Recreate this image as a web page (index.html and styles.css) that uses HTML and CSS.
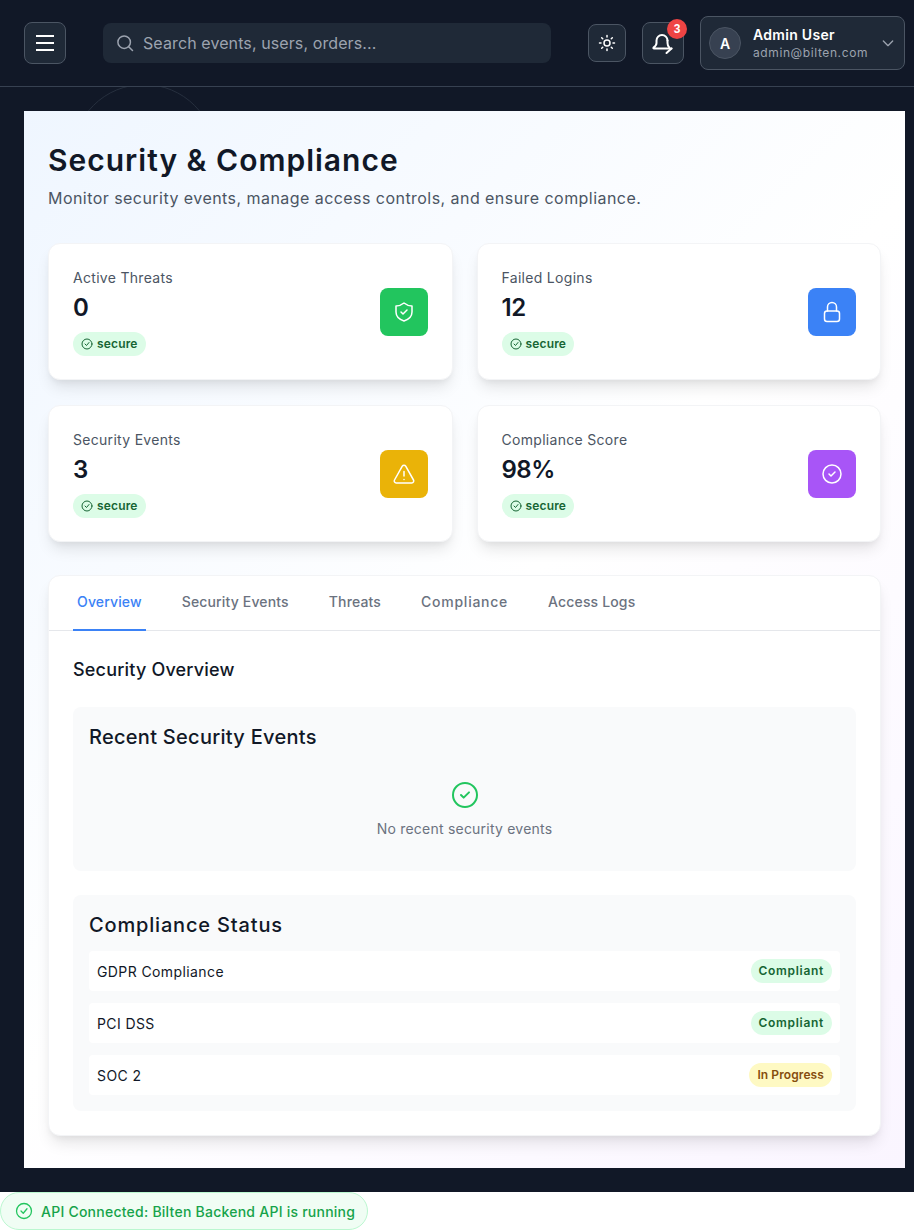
FILE: index.html
```html
<!DOCTYPE html>
<html lang="en">
<head>
    <meta charset="UTF-8">
    <meta name="viewport" content="width=device-width, initial-scale=1.0">
    <title>Security &amp; Compliance</title>
    <link rel="stylesheet" href="styles.css">
</head>
<body>
    <div class="shell">
        <header class="topbar">
            <button class="icon-btn menu-btn">
                <svg width="24" height="24" viewBox="0 0 24 24" fill="none" stroke="#fff" stroke-width="2"><path d="M3 5h18M3 12h18M3 19h18"/></svg>
            </button>
            <div class="search">
                <svg width="20" height="20" viewBox="0 0 24 24" fill="none" stroke="#9ca3af" stroke-width="1.8" stroke-linecap="round"><circle cx="11" cy="11" r="7.5"/><path d="m21 21-4.5-4.5"/></svg>
                <span>Search events, users, orders...</span>
            </div>
            <button class="icon-btn theme-btn">
                <svg width="18" height="18" viewBox="0 0 24 24" fill="none" stroke="#fff" stroke-width="2" stroke-linecap="round"><circle cx="12" cy="12" r="4"/><path d="M12 2v2M12 20v2M4.9 4.9l1.4 1.4M17.7 17.7l1.4 1.4M2 12h2M20 12h2M4.9 19.1l1.4-1.4M17.7 6.3l1.4-1.4"/></svg>
            </button>
            <button class="icon-btn bell-btn">
                <svg width="24" height="24" viewBox="0 0 24 24" fill="none" stroke="#fff" stroke-width="2" stroke-linecap="round" stroke-linejoin="round"><path d="M16.500 9.500a5.500 5.500 0 0 0-11 0V12c0 2-1.500 3.500-3 4.500-.4.500 0 1 .5 1H20.500"/><path d="M16.500 9.500V12c0 2 .7 3.500 1.800 4.500"/><path d="m15.500 22 5-4.500"/></svg>
                <span class="badge">3</span>
            </button>
            <div class="user-box">
                <span class="avatar">A</span>
                <div class="user-text">
                    <div class="user-name">Admin User</div>
                    <div class="user-mail">admin@bilten.com</div>
                </div>
                <svg class="chevron" width="16" height="16" viewBox="0 0 24 24" fill="none" stroke="#9ca3af" stroke-width="2" stroke-linecap="round" stroke-linejoin="round"><path d="m5 9 7 7 7-7"/></svg>
            </div>
        </header>

        <div class="ring"></div>

        <main class="panel">
            <h1>Security &amp; Compliance</h1>
            <p class="subtitle">Monitor security events, manage access controls, and ensure compliance.</p>

            <div class="stats">
                <div class="stat">
                    <div>
                        <div class="stat-label">Active Threats</div>
                        <div class="stat-value">0</div>
                        <span class="secure"><svg width="12" height="12" viewBox="0 0 24 24" fill="none" stroke="#166534" stroke-width="2" stroke-linecap="round" stroke-linejoin="round"><circle cx="12" cy="12" r="10"/><path d="m8 12 3 3 5-6"/></svg>secure</span>
                    </div>
                    <div class="stat-icon green">
                        <svg width="24" height="24" viewBox="0 0 24 24" fill="none" stroke="#fff" stroke-width="1.5" stroke-linecap="round" stroke-linejoin="round"><path d="M12 3c2.500 2 5 3 8 3v6c0 5-3.500 7.500-8 9-4.500-1.500-8-4-8-9V6c3 0 5.500-1 8-3Z"/><path d="m9 12 2 2 4-4"/></svg>
                    </div>
                </div>
                <div class="stat">
                    <div>
                        <div class="stat-label">Failed Logins</div>
                        <div class="stat-value">12</div>
                        <span class="secure"><svg width="12" height="12" viewBox="0 0 24 24" fill="none" stroke="#166534" stroke-width="2" stroke-linecap="round" stroke-linejoin="round"><circle cx="12" cy="12" r="10"/><path d="m8 12 3 3 5-6"/></svg>secure</span>
                    </div>
                    <div class="stat-icon blue">
                        <svg width="24" height="24" viewBox="0 0 24 24" fill="none" stroke="#fff" stroke-width="1.5" stroke-linecap="round" stroke-linejoin="round"><rect x="4.500" y="11" width="15" height="10.500" rx="2.500"/><path d="M7.500 11V7a4.500 4.500 0 0 1 9 0v4"/></svg>
                    </div>
                </div>
                <div class="stat">
                    <div>
                        <div class="stat-label">Security Events</div>
                        <div class="stat-value">3</div>
                        <span class="secure"><svg width="12" height="12" viewBox="0 0 24 24" fill="none" stroke="#166534" stroke-width="2" stroke-linecap="round" stroke-linejoin="round"><circle cx="12" cy="12" r="10"/><path d="m8 12 3 3 5-6"/></svg>secure</span>
                    </div>
                    <div class="stat-icon yellow">
                        <svg width="24" height="24" viewBox="0 0 24 24" fill="none" stroke="#fff" stroke-width="1.5" stroke-linecap="round" stroke-linejoin="round"><path d="M10.300 4.200 2.500 18a2 2 0 0 0 1.700 3h15.600a2 2 0 0 0 1.700-3L13.700 4.200a2 2 0 0 0-3.400 0Z"/><path d="M12 9.500v4.500M12 17.500h.01"/></svg>
                    </div>
                </div>
                <div class="stat">
                    <div>
                        <div class="stat-label">Compliance Score</div>
                        <div class="stat-value">98%</div>
                        <span class="secure"><svg width="12" height="12" viewBox="0 0 24 24" fill="none" stroke="#166534" stroke-width="2" stroke-linecap="round" stroke-linejoin="round"><circle cx="12" cy="12" r="10"/><path d="m8 12 3 3 5-6"/></svg>secure</span>
                    </div>
                    <div class="stat-icon purple">
                        <svg width="24" height="24" viewBox="0 0 24 24" fill="none" stroke="#fff" stroke-width="1.5" stroke-linecap="round" stroke-linejoin="round"><circle cx="12" cy="12" r="9"/><path d="m9 12 2 2 4-4"/></svg>
                    </div>
                </div>
            </div>

            <section class="tabs-card">
                <nav class="tabs">
                    <a class="tab active">Overview</a>
                    <a class="tab">Security Events</a>
                    <a class="tab">Threats</a>
                    <a class="tab tab-wide">Compliance</a>
                    <a class="tab">Access Logs</a>
                </nav>
                <div class="tab-body">
                    <h2>Security Overview</h2>
                    <div class="box">
                        <h3>Recent Security Events</h3>
                        <div class="empty">
                            <svg width="32" height="32" viewBox="0 0 24 24" fill="none" stroke="#22c55e" stroke-width="1.500" stroke-linecap="round" stroke-linejoin="round"><circle cx="12" cy="12" r="9"/><path d="m9 12 2 2 4-4"/></svg>
                            <p>No recent security events</p>
                        </div>
                    </div>
                    <div class="box">
                        <h3 class="status-title">Compliance Status</h3>
                        <div class="rows">
                            <div class="row"><span>GDPR Compliance</span><span class="pill ok">Compliant</span></div>
                            <div class="row"><span>PCI DSS</span><span class="pill ok">Compliant</span></div>
                            <div class="row"><span>SOC 2</span><span class="pill wip">In Progress</span></div>
                        </div>
                    </div>
                </div>
            </section>
        </main>
    </div>

    <div class="api-status">
        <svg width="18" height="18" viewBox="0 0 24 24" fill="none" stroke="#22c55e" stroke-width="1.700" stroke-linecap="round" stroke-linejoin="round"><circle cx="12" cy="12" r="10"/><path d="m8 12 3 3 5-6"/></svg>
        API Connected: Bilten Backend API is running
    </div>
</body>
</html>
```

FILE: styles.css
```css
* { box-sizing: border-box; }
body { margin: 0; background: #fff; font-family: "Inter", "Liberation Sans", sans-serif; color: #111827; }
h1, h2, h3, p { margin: 0; }

.shell { position: relative; height: 1192px; background: #111827; }

.topbar { position: relative; z-index: 1; display: flex; align-items: center; height: 87px; padding: 0 9px 0 24px; background: #111827; border-bottom: 1px solid #374151; }
.icon-btn { position: relative; display: flex; align-items: center; justify-content: center; padding: 0; background: #1f2937; border: 1px solid #4b5563; border-radius: 8px; }
.menu-btn { width: 42px; height: 42px; }
.theme-btn { width: 38px; height: 38px; margin-left: 37px; }
.bell-btn { width: 42px; height: 42px; margin-left: 16px; }
.badge { position: absolute; top: -4px; right: -4px; width: 20px; height: 20px; line-height: 20px; border-radius: 50%; background: #ef4444; color: #fff; font-size: 12px; font-weight: 600; }

.search { display: flex; align-items: center; gap: 8px; width: 448px; height: 40px; margin-left: 37px; padding-left: 12px; background: #1f2937; border-radius: 8px; color: #9ca3af; font-size: 16px; letter-spacing: .1px; }

.user-box { display: flex; align-items: center; width: 205px; height: 54px; margin-left: 16px; padding: 0 8px; background: #1f2937; border: 1px solid #4b5563; border-radius: 8px; }
.avatar { display: flex; align-items: center; justify-content: center; width: 32px; height: 32px; border-radius: 50%; background: #374151; border: 1px solid #4b5563; color: #fff; font-size: 14px; font-weight: 600; }
.user-text { flex: 1; margin-left: 12px; padding-top: 2px; line-height: 18px; }
.user-name { color: #fff; font-size: 14px; font-weight: 600; letter-spacing: .3px; }
.user-mail { color: #9ca3af; font-size: 12px; letter-spacing: .6px; }

.ring { position: absolute; left: 72px; top: 84px; width: 144px; height: 144px; border: 1px solid #262f3e; border-radius: 50%; }

.panel { position: relative; width: 881px; height: 1057px; margin: 24px 0 0 24px; padding: 31px 24px 0; background: linear-gradient(135deg, #eff6ff 0%, #fff 50%, #faf5ff 100%); }
h1 { font-size: 30px; font-weight: 600; line-height: 36px; letter-spacing: 1px; }
.subtitle { margin-top: 8px; font-size: 16px; line-height: 24px; color: #4b5563; letter-spacing: .45px; }

.stats { display: grid; grid-template-columns: 1fr 1fr; gap: 25px 24px; margin-top: 33px; }
.stat { display: flex; align-items: center; justify-content: space-between; height: 137px; padding: 0 24px; background: #fff; border: 1px solid #f3f4f6; border-radius: 12px; box-shadow: 0 10px 15px -3px rgba(0, 0, 0, .1), 0 4px 6px -2px rgba(0, 0, 0, .05); }
.stat-label { font-size: 14px; line-height: 20px; color: #4b5563; letter-spacing: .3px; }
.stat-value { margin-top: 4px; font-size: 24px; line-height: 32px; font-weight: 600; letter-spacing: -.5px; }
.secure { display: inline-flex; align-items: center; gap: 4px; height: 24px; margin-top: 8px; padding: 0 8px; border-radius: 12px; background: #dcfce7; color: #166534; font-size: 12px; font-weight: 600; letter-spacing: .15px; }
.stat-icon { display: flex; align-items: center; justify-content: center; width: 48px; height: 48px; border-radius: 8px; }
.green { background: #22c55e; }
.blue { background: #3b82f6; }
.yellow { background: #eab308; }
.purple { background: #a855f7; }

.tabs-card { margin-top: 33px; background: #fff; border: 1px solid #f3f4f6; border-radius: 12px; box-shadow: 0 10px 15px -3px rgba(0, 0, 0, .1), 0 4px 6px -2px rgba(0, 0, 0, .05); }
.tabs { display: flex; gap: 32px; height: 55px; padding: 0 24px; border-bottom: 1px solid #e5e7eb; }
.tab { height: 55px; padding: 16px 4px 0; font-size: 14px; line-height: 20px; font-weight: 500; color: #6b7280; border-bottom: 2px solid transparent; letter-spacing: .15px; }
.tab-wide { letter-spacing: .75px; }
.tab.active { color: #3b82f6; border-bottom-color: #3b82f6; }

.tab-body { padding: 25px 24px 24px; }
h2 { font-size: 18px; line-height: 28px; font-weight: 500; margin-bottom: 23px; letter-spacing: .18px; }
h3 { font-size: 20px; line-height: 28px; font-weight: 500; letter-spacing: .28px; }
h3.status-title { letter-spacing: .83px; }
.box { padding: 16px; margin-bottom: 24px; background: #f9fafb; border-radius: 8px; }
.box:last-child { margin-bottom: 0; }
.empty { display: flex; flex-direction: column; align-items: center; gap: 8px; padding: 28px 0 16px; font-size: 14px; line-height: 20px; color: #6b7280; letter-spacing: .22px; }
.rows { display: flex; flex-direction: column; gap: 12px; margin-top: 12px; }
.row { display: flex; align-items: center; justify-content: space-between; height: 40px; padding: 0 8px; background: #fff; border-radius: 4px; font-size: 14px; letter-spacing: .4px; }
.pill { height: 24px; line-height: 24px; padding: 0 8px; border-radius: 12px; font-size: 12px; font-weight: 600; }
.ok { background: #dcfce7; color: #166534; letter-spacing: .7px; }
.wip { background: #fef9c3; color: #854d0e; letter-spacing: .1px; }

.api-status { display: flex; align-items: center; gap: 8px; width: 368px; height: 38px; padding-left: 14px; background: #f0fdf4; border: 1px solid #bbf7d0; border-radius: 19px; color: #16a34a; font-size: 14px; font-weight: 500; letter-spacing: .24px; }
```
